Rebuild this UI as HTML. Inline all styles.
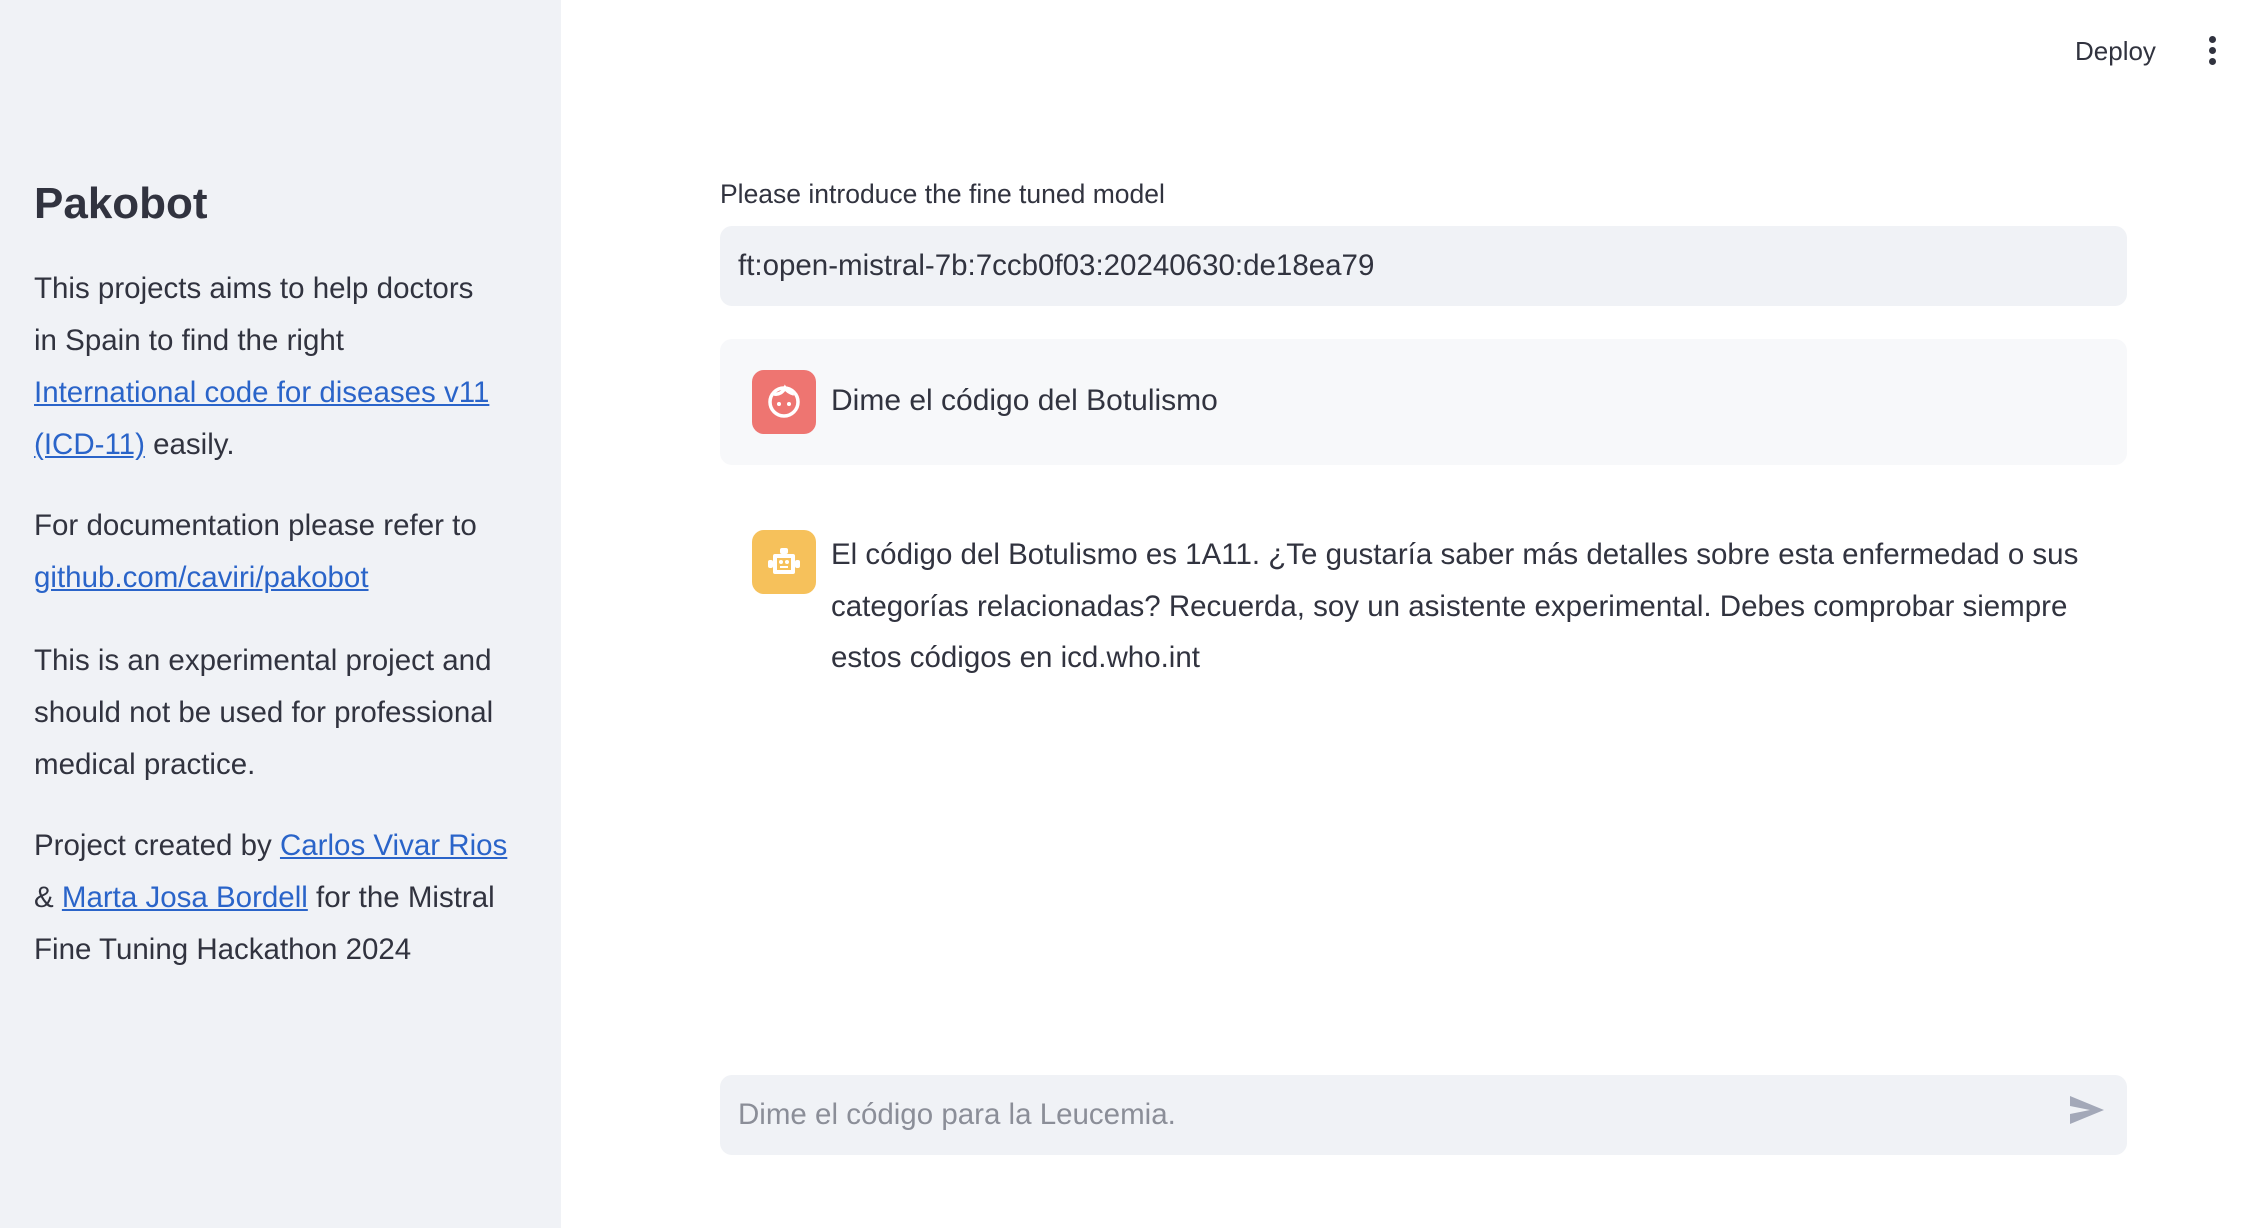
<!DOCTYPE html>
<html><head><meta charset="utf-8"><style>
*{margin:0;padding:0;box-sizing:border-box}
body{width:2260px;height:1228px;background:#fff;font-family:"Liberation Sans",sans-serif;color:#31333f;position:relative;overflow:hidden}
.sb{position:absolute;left:0;top:0;width:561px;height:1228px;background:#f0f2f6}
.t{position:absolute;white-space:nowrap}
.sbt{left:34px;font-size:29.5px;line-height:52px}
a{color:#2a64c9;text-decoration:underline}
.box{position:absolute;left:720px;width:1407px;border-radius:12px}
.av{position:absolute;left:752px;width:64px;height:64px;border-radius:12px}
.msg{left:831px;font-size:29.5px}
</style></head><body>
<div class="sb"></div>
<div class="t" style="left:34px;top:176px;font-size:44px;font-weight:bold;line-height:56px;color:#31333f">Pakobot</div>
<div class="t sbt" style="top:263px">This projects aims to help doctors<br>in Spain to find the right<br><a>International code for diseases v11</a><br><a>(ICD-11)</a> easily.</div>
<div class="t sbt" style="top:500px">For documentation please refer to<br><a>github.com/caviri/pakobot</a></div>
<div class="t sbt" style="top:635px">This is an experimental project and<br>should not be used for professional<br>medical practice.</div>
<div class="t sbt" style="top:820px">Project created by <a>Carlos Vivar Rios</a><br>&amp; <a>Marta Josa Bordell</a> for the Mistral<br>Fine Tuning Hackathon 2024</div>

<div class="t" style="left:2075px;top:35px;font-size:26px;line-height:32px">Deploy</div>
<div style="position:absolute;left:2209px;top:36px;width:7px">
<div style="width:7px;height:7px;border-radius:50%;background:#31333f;margin-bottom:4px"></div>
<div style="width:7px;height:7px;border-radius:50%;background:#31333f;margin-bottom:4px"></div>
<div style="width:7px;height:7px;border-radius:50%;background:#31333f"></div></div>

<div class="t" style="left:720px;top:179px;font-size:26.5px;line-height:30px">Please introduce the fine tuned model</div>
<div class="box" style="top:226px;height:80px;background:#f0f2f6"></div>
<div class="t" style="left:738px;top:248px;font-size:29.5px;line-height:36px">ft:open-mistral-7b:7ccb0f03:20240630:de18ea79</div>

<div class="box" style="top:339px;height:126px;background:#f7f8fa"></div>
<div class="av" style="top:370px;background:#ee7571">
<svg width="64" height="64" viewBox="0 0 64 64"><circle cx="32" cy="32" r="14" fill="none" stroke="#fff" stroke-width="3.5"/><path d="M22 24c5 1 9-2 11-6 2 3 5 5 9 6" fill="none" stroke="#fff" stroke-width="3.5"/><circle cx="27" cy="34" r="2" fill="#fff"/><circle cx="37" cy="34" r="2" fill="#fff"/></svg></div>
<div class="t msg" style="top:383px;line-height:36px;font-size:30px">Dime el código del Botulismo</div>

<div class="av" style="top:530px;background:#f6c15b">
<svg width="64" height="64" viewBox="0 0 64 64"><rect x="21" y="24" width="22" height="20" rx="2" fill="#fff"/><rect x="16" y="30" width="5" height="8" rx="2" fill="#fff"/><rect x="43" y="30" width="5" height="8" rx="2" fill="#fff"/><rect x="28" y="18" width="8" height="6" rx="2" fill="#fff"/><rect x="25" y="28" width="14" height="12" fill="#f6c15b"/><circle cx="29" cy="32" r="2" fill="#fff"/><circle cx="35" cy="32" r="2" fill="#fff"/><rect x="28" y="36" width="8" height="2" fill="#fff"/></svg></div>
<div class="t msg" style="top:529px;line-height:51.5px">El código del Botulismo es 1A11. ¿Te gustaría saber más detalles sobre esta enfermedad o sus<br>categorías relacionadas? Recuerda, soy un asistente experimental. Debes comprobar siempre<br>estos códigos en icd.who.int</div>

<div class="box" style="top:1075px;height:80px;background:#f0f2f6"></div>
<div class="t" style="left:738px;top:1097px;font-size:29.5px;line-height:36px;color:#8b8e98">Dime el código para la Leucemia.</div>
<svg style="position:absolute;left:2068px;top:1094px" width="38" height="32" viewBox="0 0 38 32"><path d="M2 2L36 16L2 30L2 20L22 16L2 12Z" fill="#a3a8b8"/></svg>
</body></html>
